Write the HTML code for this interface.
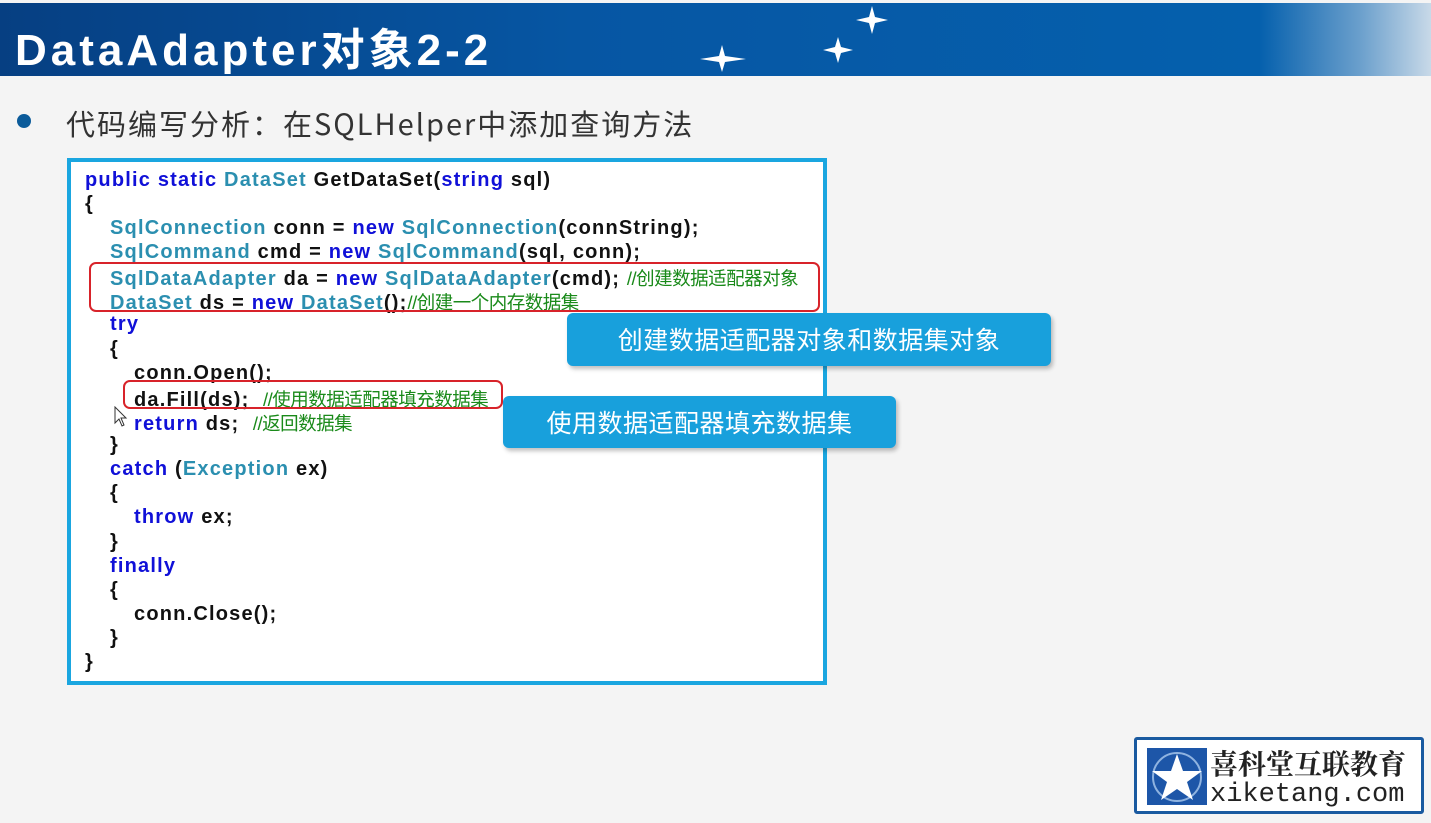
<!DOCTYPE html>
<html><head><meta charset="utf-8"><style>
*{margin:0;padding:0;box-sizing:border-box}
body{width:1431px;height:823px;background:#f4f4f4;position:relative;overflow:hidden;font-family:"Liberation Sans","Noto Sans CJK SC",sans-serif}
.hdr{position:absolute;left:0;top:3px;width:1431px;height:73px;background:linear-gradient(90deg,#063f82 0%,#0656a3 40%,#0560ad 88%,#6a9fcc 95%,#c8d9e8 100%)}
.title{position:absolute;left:15px;top:14px;color:#fff;font-size:44px;font-weight:bold;font-family:"Liberation Sans","Noto Sans CJK SC",sans-serif;letter-spacing:4px;white-space:nowrap}
.star{position:absolute}
.bullet{position:absolute;left:17px;top:114px;width:14px;height:14px;border-radius:50%;background:#0b5b9a}
.sub{position:absolute;left:66px;top:102px;font-size:29px;color:#333;letter-spacing:2px;white-space:nowrap;font-family:"Noto Sans CJK SC",sans-serif}
.code{position:absolute;left:67px;top:158px;width:760px;height:527px;border:4px solid #1aa6e0;background:#fff}
.ln{position:absolute;font-size:20px;letter-spacing:1.2px;font-weight:bold;color:#111;white-space:pre;font-family:"Liberation Sans","Noto Sans CJK SC",sans-serif}
.k{color:#1010d8}.t{color:#2b8fb0}.c{color:#1a8a1a;font-weight:normal;font-size:18.5px;letter-spacing:-0.5px}
.red{position:absolute;border:2.5px solid #d8232a;border-radius:7px}
.call{position:absolute;background:#18a0dc;color:#fff;font-size:25px;letter-spacing:0.5px;border-radius:6px;box-shadow:2px 3px 4px rgba(0,0,0,.25);text-align:center;white-space:nowrap;font-family:"Noto Sans CJK SC",sans-serif}
.logo{position:absolute;left:1134px;top:737px;width:290px;height:77px;border:3px solid #1a5aa0;border-radius:3px;background:#fff}
</style></head><body>
<div class="hdr"></div>
<div class="title">DataAdapter对象2-2</div>
<svg class="star" style="left:0;top:0" width="1431" height="80">
<g fill="#fff">
<path d="M872 6 L875 17 L888 20 L875 23 L872 34 L869 23 L856 20 L869 17Z"/>
<path d="M838 37 L841 47 L853 50 L841 53 L838 63 L835 53 L823 50 L835 47Z"/>
<path d="M722 45 L725 56 L746 59 L725 62 L722 72 L719 62 L700 59 L719 56Z"/>
</g></svg>
<div class="bullet"></div>
<div class="sub">代码编写分析：在SQLHelper中添加查询方法</div>
<div class="code"></div>
<div class="ln" style="left:85px;top:169px"><span class="k">public static </span><span class="t">DataSet</span> GetDataSet(<span class="k">string</span> sql)</div>
<div class="ln" style="left:85px;top:193px">{</div>
<div class="ln" style="left:110px;top:217px"><span class="t">SqlConnection</span> conn = <span class="k">new</span> <span class="t">SqlConnection</span>(connString);</div>
<div class="ln" style="left:110px;top:241px"><span class="t">SqlCommand</span> cmd = <span class="k">new</span> <span class="t">SqlCommand</span>(sql, conn);</div>
<div class="ln" style="left:110px;top:265px"><span class="t">SqlDataAdapter</span> da = <span class="k">new</span> <span class="t">SqlDataAdapter</span>(cmd); <span class="c">//创建数据适配器对象</span></div>
<div class="ln" style="left:110px;top:289px"><span class="t">DataSet</span> ds = <span class="k">new</span> <span class="t">DataSet</span>();<span class="c">//创建一个内存数据集</span></div>
<div class="ln" style="left:110px;top:313px"><span class="k">try</span></div>
<div class="ln" style="left:110px;top:338px">{</div>
<div class="ln" style="left:134px;top:362px">conn.Open();</div>
<div class="ln" style="left:134px;top:386px">da.Fill(ds);  <span class="c">//使用数据适配器填充数据集</span></div>
<div class="ln" style="left:134px;top:410px"><span class="k">return</span> ds;  <span class="c">//返回数据集</span></div>
<div class="ln" style="left:110px;top:434px">}</div>
<div class="ln" style="left:110px;top:458px"><span class="k">catch</span> (<span class="t">Exception</span> ex)</div>
<div class="ln" style="left:110px;top:482px">{</div>
<div class="ln" style="left:134px;top:506px"><span class="k">throw</span> ex;</div>
<div class="ln" style="left:110px;top:531px">}</div>
<div class="ln" style="left:110px;top:555px"><span class="k">finally</span></div>
<div class="ln" style="left:110px;top:579px">{</div>
<div class="ln" style="left:134px;top:603px">conn.Close();</div>
<div class="ln" style="left:110px;top:627px">}</div>
<div class="ln" style="left:85px;top:651px">}</div>
<div class="red" style="left:89px;top:262px;width:731px;height:50px"></div>
<div class="red" style="left:123px;top:380px;width:380px;height:29px"></div>
<svg style="position:absolute;left:114px;top:406px" width="14" height="22"><path d="M1 1 L1 17 L5 13 L8 20 L10 19 L7 12 L12 12Z" fill="#fff" stroke="#333" stroke-width="1"/></svg>
<div class="call" style="left:567px;top:313px;width:484px;height:53px;line-height:53px">创建数据适配器对象和数据集对象</div>
<div class="call" style="left:503px;top:396px;width:393px;height:52px;line-height:52px">使用数据适配器填充数据集</div>
<div class="logo">
<svg style="position:absolute;left:10px;top:8px" width="60" height="57"><rect width="60" height="57" fill="#1d56a8"/><circle cx="30" cy="29" r="24" fill="none" stroke="#8fb3e0" stroke-width="2"/><path d="M30 6 L36 23 L55 23 L40 34 L46 52 L30 41 L14 52 L20 34 L5 23 L24 23Z" fill="#fff"/></svg>
<div style="position:absolute;left:73px;top:5px;font-size:28px;line-height:36px;font-weight:bold;color:#222;white-space:nowrap;font-family:'Noto Serif CJK SC',serif">喜科堂互联教育</div>
<div style="position:absolute;left:73px;top:40px;font-size:27px;line-height:30px;color:#222;white-space:nowrap;font-family:'Liberation Mono',monospace">xiketang.com</div>
</div>
</body></html>
